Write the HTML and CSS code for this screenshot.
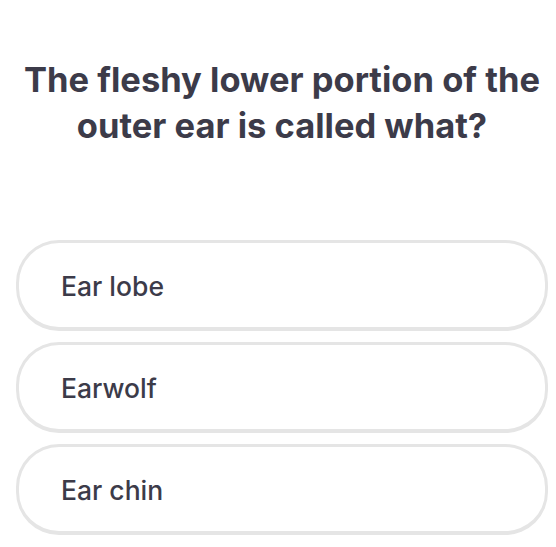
FILE: index.html
```html
<!DOCTYPE html>
<html>
<head>
<meta charset="utf-8">
<link rel="stylesheet" href="styles.css">
</head>
<body>
<main class="quiz">
  <h1 class="question">The fleshy lower portion of the outer ear is called what?</h1>
  <div class="options">
    <button class="option">Ear lobe</button>
    <button class="option">Earwolf</button>
    <button class="option">Ear chin</button>
  </div>
</main>
</body>
</html>
```
FILE: styles.css
```css
html, body {
  margin: 0;
  padding: 0;
  background: #ffffff;
}
body {
  font-family: "Inter", "Liberation Sans", sans-serif;
  color: #3c3b49;
}
.quiz {
  padding: 57px 8px 0 16px;
  display: flex;
  flex-direction: column;
}
.question {
  margin: 0 4px;
  font-size: 34.5px;
  line-height: 46px;
  font-weight: 700;
  text-align: center;
  letter-spacing: 0;
}
.options {
  margin-top: 91px;
  display: flex;
  flex-direction: column;
  gap: 11px;
}
.option {
  box-sizing: border-box;
  height: 91px;
  width: 100%;
  border: 3px solid #e5e5e5;
  border-bottom-width: 4px;
  border-radius: 43px;
  background: #fff;
  text-align: left;
  padding: 2px 0 0 42px;
  font-family: inherit;
  font-size: 26.5px;
  font-weight: 500;
  color: #3c3b49;
}
```
